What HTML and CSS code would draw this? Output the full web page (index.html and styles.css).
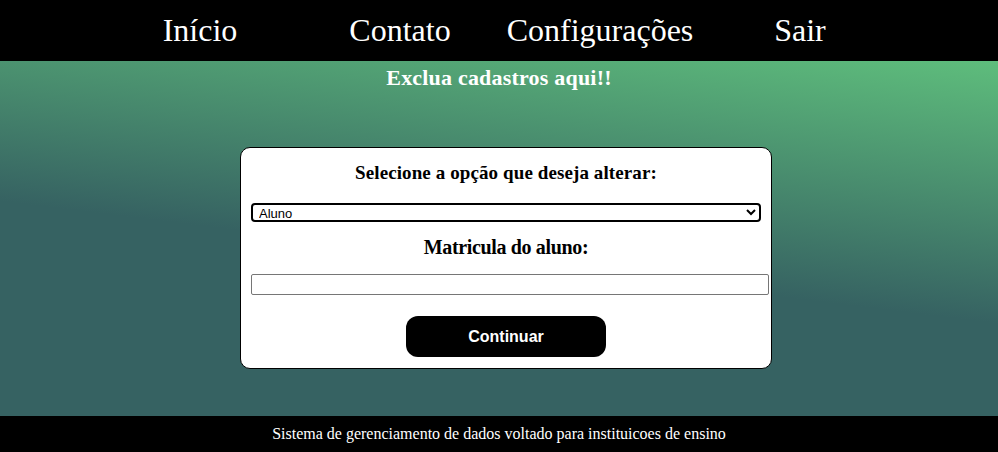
FILE: index.html
```html
<!DOCTYPE html>
<html lang="pt-BR">
<head>
<meta charset="utf-8">
<title>Excluir cadastros</title>
<link rel="stylesheet" href="styles.css">
</head>
<body>
<header class="topbar">
  <nav class="nav">
    <a class="nav-item" href="#">Início</a>
    <a class="nav-item" href="#">Contato</a>
    <a class="nav-item" href="#">Configurações</a>
    <a class="nav-item" href="#">Sair</a>
  </nav>
</header>
<main class="main">
  <h2 class="page-title">Exclua cadastros aqui!!</h2>
  <form class="card">
    <h3 class="card-title">Selecione a opção que deseja alterar:</h3>
    <select class="select">
      <option>Aluno</option>
      <option>Professor</option>
    </select>
    <h3 class="field-label">Matricula do aluno:</h3>
    <input class="text-input" type="text">
    <button class="btn" type="button">Continuar</button>
  </form>
</main>
<footer class="footer">Sistema de gerenciamento de dados voltado para instituicoes de ensino</footer>
</body>
</html>
```

FILE: styles.css
```css
html, body {
  margin: 0;
  padding: 0;
  height: 100%;
}
body {
  display: flex;
  flex-direction: column;
  font-family: "Liberation Serif", "Times New Roman", serif;
  background: #366262;
}
.topbar {
  background: #000;
  height: 61px;
  flex: none;
}
.nav {
  display: flex;
  justify-content: center;
  height: 100%;
  padding-left: 2px;
}
.nav-item {
  width: 200px;
  text-align: center;
  color: #fff;
  text-decoration: none;
  font-size: 32px;
  line-height: 61px;
}
.main {
  flex: 1;
  display: flex;
  flex-direction: column;
  align-items: center;
  background: linear-gradient(187deg, #5ebd7c 0%, #366262 55%, #366262 100%);
}
.page-title {
  margin: 4px 0 0;
  font-size: 22px;
  line-height: 26px;
  font-weight: bold;
  letter-spacing: 0.2px;
  color: #fff;
}
.card {
  margin: 56px 0 0 14px;
  width: 510px;
  padding: 10px 10px 11px;
  background: #fff;
  border: 1px solid #000;
  border-radius: 10px;
  display: flex;
  flex-direction: column;
  align-items: center;
}
.card-title {
  margin: 0 0 15px;
  font-size: 19px;
  line-height: 30px;
  font-weight: bold;
  letter-spacing: 0.1px;
  color: #000;
}
.select {
  box-sizing: border-box;
  width: 100%;
  height: 19px;
  margin: 0;
  padding: 0 0 0 2px;
  border: 2px solid #000;
  border-radius: 4px;
  background: #fff;
  font-family: "Liberation Sans", Arial, sans-serif;
  font-size: 13px;
  color: #000;
}
.field-label {
  margin: 10px 0 0;
  font-size: 20px;
  line-height: 30px;
  font-weight: bold;
  letter-spacing: -0.35px;
  color: #000;
}
.text-input {
  align-self: stretch;
  margin: 12px -8px 0 0;
  height: 15px;
  padding: 2px 3px;
  border: 1px solid #767676;
  border-radius: 2px;
  font-size: 13px;
  width: auto;
  box-sizing: content-box;
}
.btn {
  margin-top: 21px;
  width: 200px;
  height: 41px;
  border: none;
  border-radius: 12px;
  background: #000;
  color: #fff;
  font-family: "Liberation Sans", Arial, sans-serif;
  font-size: 16px;
  font-weight: bold;
  cursor: pointer;
}
.footer {
  flex: none;
  height: 36px;
  line-height: 36px;
  background: #000;
  color: #fff;
  text-align: center;
  font-size: 16px;
}
```
